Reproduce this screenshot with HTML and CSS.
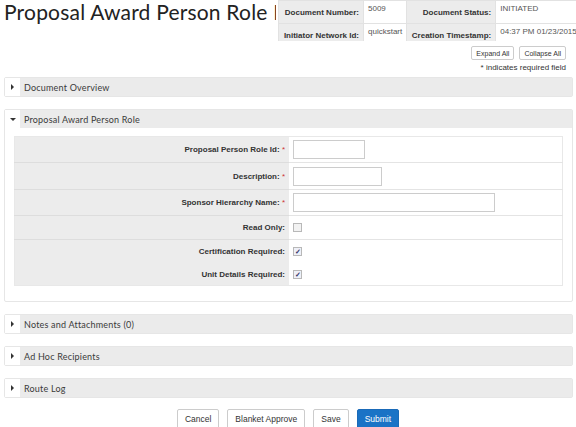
FILE: index.html
```html
<!DOCTYPE html>
<html>
<head>
<meta charset="utf-8">
<link rel="stylesheet" href="styles.css">
</head>
<body>
<div class="page">
  <div class="top">
    <h1 class="title">Proposal Award Person Role Id</h1>
    <table class="docinfo">
      <tr>
        <th>Document Number:</th><td class="v1">5009</td>
        <th>Document Status:</th><td class="v2">INITIATED</td>
      </tr>
      <tr>
        <th>Initiator Network Id:</th><td class="v1">quickstart</td>
        <th>Creation Timestamp:</th><td class="v2">04:37 PM 01/23/2015</td>
      </tr>
    </table>
  </div>
  <div class="tools">
    <button class="small">Expand All</button>
    <button class="small">Collapse All</button>
  </div>
  <div class="req">* indicates required field</div>

  <div class="section closed first">
    <div class="head"><span class="tog"><span class="arr-r"></span></span><span class="htext">Document Overview</span></div>
  </div>

  <div class="section open">
    <div class="head"><span class="tog"><span class="arr-d"></span></span><span class="htext">Proposal Award Person Role</span></div>
    <div class="body">
      <table class="form">
        <tr class="r1"><th>Proposal Person Role Id: <span class="star">*</span></th><td><input class="in1" type="text"></td></tr>
        <tr class="r2"><th>Description: <span class="star">*</span></th><td><input class="in2" type="text"></td></tr>
        <tr class="r3"><th>Sponsor Hierarchy Name: <span class="star">*</span></th><td><input class="in3" type="text"></td></tr>
        <tr class="r4"><th>Read Only:</th><td><span class="cb"></span></td></tr>
        <tr class="r5 nb"><th>Certification Required:</th><td><span class="cb on">&#10003;</span></td></tr>
        <tr class="r6"><th>Unit Details Required:</th><td><span class="cb on">&#10003;</span></td></tr>
      </table>
    </div>
  </div>

  <div class="section closed">
    <div class="head"><span class="tog"><span class="arr-r"></span></span><span class="htext">Notes and Attachments (0)</span></div>
  </div>
  <div class="section closed">
    <div class="head"><span class="tog"><span class="arr-r"></span></span><span class="htext">Ad Hoc Recipients</span></div>
  </div>
  <div class="section closed">
    <div class="head"><span class="tog"><span class="arr-r"></span></span><span class="htext">Route Log</span></div>
  </div>

  <div class="actions">
    <button class="btn">Cancel</button>
    <button class="btn">Blanket Approve</button>
    <button class="btn">Save</button>
    <button class="btn primary">Submit</button>
  </div>
</div>
</body>
</html>
```
FILE: styles.css
```css
html, body {
  margin: 0;
  padding: 0;
  background: #fff;
  overflow: hidden;
}
body {
  font-family: "Liberation Sans", Arial, sans-serif;
  color: #333;
}
.page {
  width: 576px;
  height: 427px;
  overflow: hidden;
}
.top {
  display: flex;
  height: 41px;
  overflow: hidden;
}
.title {
  margin: -1px 0 0 0;
  padding: 0 0 0 4px;
  width: 272px;
  flex: 0 0 272px;
  white-space: nowrap;
  overflow: hidden;
  font-family: "Lato", sans-serif;
  font-weight: 400;
  font-size: 21px;
  letter-spacing: 0.2px;
  color: #222;
  height: 30px;
}
.docinfo {
  border-collapse: collapse;
  flex: 0 0 auto;
  margin-left: 2px;
  font-size: 8px;
  height: 40px;
}
.docinfo th, .docinfo td {
  border: 1px solid #e2e2e2;
  padding: 0 4px;
  height: 19px;
  white-space: nowrap;
}
.docinfo th {
  background: #ececec;
  text-align: right;
  font-weight: bold;
  color: #333;
  vertical-align: middle;
}
.docinfo td {
  vertical-align: top;
  padding-top: 3px;
  color: #555;
}
.docinfo th:first-child { width: 76px; }
.docinfo td.v1 { width: 34px; }
.docinfo th:nth-child(3) { width: 80px; }
.docinfo td.v2 { width: 80px; }

.tools {
  display: flex;
  justify-content: flex-end;
  gap: 5px;
  padding: 5px 10px 0 0;
}
button.small {
  font-family: "Liberation Sans", Arial, sans-serif;
  font-size: 7px;
  color: #333;
  background: #fff;
  border: 1px solid #ccc;
  border-radius: 2px;
  height: 14px;
  padding: 0 4px;
}
.req {
  text-align: right;
  font-size: 8px;
  color: #333;
  padding: 3px 10px 0 0;
  height: 10px;
}

.section {
  margin: 12px 3px 0 4px;
  border: 1px solid #e6e6e6;
  border-radius: 2px;
}
.section.first { margin-top: 4px; }
.head {
  display: flex;
  height: 18px;
  align-items: stretch;
}
.tog {
  width: 15px;
  flex: 0 0 15px;
  background: #fff;
  display: flex;
  align-items: center;
  justify-content: center;
}
.arr-r {
  width: 0; height: 0;
  border-top: 3px solid transparent;
  border-bottom: 3px solid transparent;
  border-left: 3px solid #333;
}
.arr-d {
  width: 0; height: 0;
  border-left: 3px solid transparent;
  border-right: 3px solid transparent;
  border-top: 3px solid #333;
}
.htext {
  flex: 1;
  background: #ebebeb;
  font-family: "Lato", sans-serif;
  font-size: 9px;
  letter-spacing: 0.2px;
  color: #3a3a3a;
  display: flex;
  align-items: center;
  padding-left: 4px;
}
.body {
  padding: 8px 9px 15px 9px;
}
.form {
  width: 100%;
  border-collapse: collapse;
  font-size: 8px;
  border: 1px solid #e8e8e8;
}
.form th {
  width: 270px;
  background: #ececec;
  text-align: right;
  font-weight: bold;
  color: #333;
  padding: 0 4px 0 0;
  border-bottom: 1px solid #ddd;
  white-space: nowrap;
}
.form td {
  background: #fff;
  padding: 0 0 0 4px;
  border-bottom: 1px solid #e4e4e4;
}
.form tr.nb th, .form tr.nb td { border-bottom: none; }
.form tr.r6 th, .form tr.r6 td { border-bottom: none; }
.star { color: #c33; font-weight: normal; }
.r1 th, .r1 td { height: 25px; }
.r2 th, .r2 td { height: 26px; }
.r3 th, .r3 td { height: 25px; }
.r4 th, .r4 td { height: 23px; }
.r5 th, .r5 td { height: 23px; }
.r6 th, .r6 td { height: 22px; }
input {
  box-sizing: border-box;
  border: 1px solid #ccc;
  height: 19px;
  margin: 0;
  padding: 0;
  display: block;
}
.in1 { width: 72px; }
.in2 { width: 89px; }
.in3 { width: 202px; }
.cb {
  display: block;
  box-sizing: border-box;
  width: 9px;
  height: 9px;
  border: 1px solid #b8b8b8;
  background: #f2f2f2;
  font-size: 7px;
  line-height: 7px;
  text-align: center;
  color: #336;
  font-weight: bold;
}
.cb.on { background: #eef0f8; }

.actions {
  display: flex;
  justify-content: center;
  gap: 8px;
  margin-top: 11px;
  padding-left: 0px;
}
.btn {
  font-family: "Liberation Sans", Arial, sans-serif;
  font-size: 8.5px;
  color: #333;
  background: #fff;
  border: 1px solid #ccc;
  border-radius: 2px;
  height: 20px;
  padding: 0 7px;
}
.btn.primary {
  background: #1a73c6;
  border-color: #1a6ab8;
  color: #fff;
}
```
